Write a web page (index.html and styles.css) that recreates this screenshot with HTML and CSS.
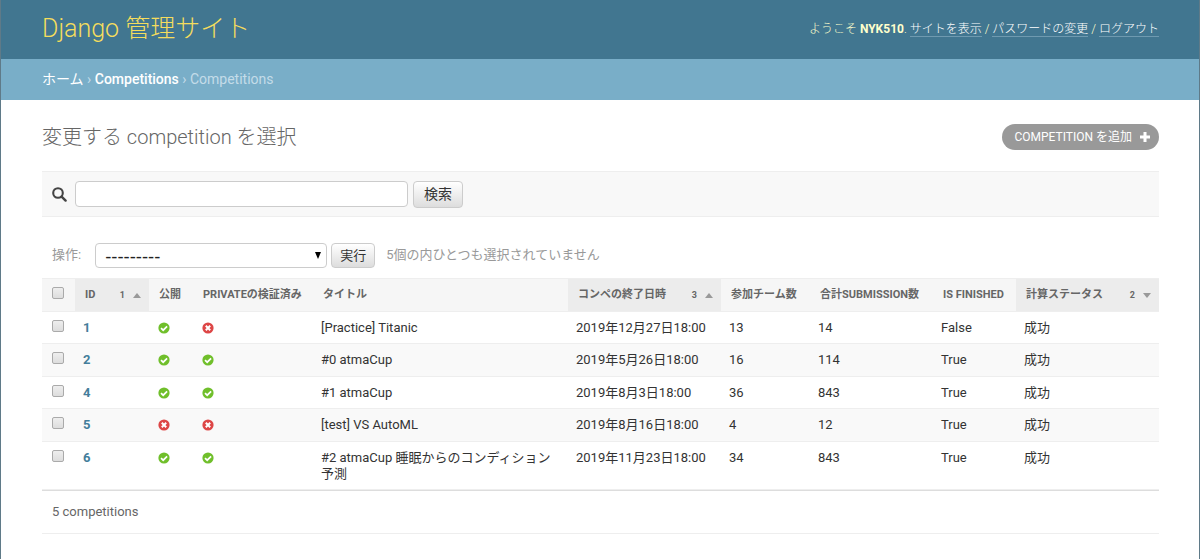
FILE: index.html
```html
<!DOCTYPE html>
<html lang="ja">
<head>
    <meta charset="UTF-8">
    <meta name="viewport" content="width=device-width, initial-scale=1.0">
    <title>変更する competition を選択 | Django 管理サイト</title>
    <link rel="stylesheet" href="styles.css">
</head>
<body>

    <!-- shared icons -->
    <svg class="sprite" aria-hidden="true">
        <symbol id="icon-yes" viewBox="0 0 12 12">
            <circle cx="6" cy="6" r="5.6" fill="#70bf2b"/>
            <path d="M3 6.1l2.2 2.1 3.9-3.9" fill="none" stroke="#fff" stroke-width="1.7"/>
        </symbol>
        <symbol id="icon-no" viewBox="0 0 12 12">
            <circle cx="6" cy="6" r="5.6" fill="#dd4646"/>
            <path d="M3.8 3.8l4.4 4.4M8.2 3.8L3.8 8.2" fill="none" stroke="#fff" stroke-width="2"/>
        </symbol>
        <symbol id="icon-up" viewBox="0 0 8 5">
            <path d="M0 5l4-5 4 5z" fill="#999"/>
        </symbol>
        <symbol id="icon-down" viewBox="0 0 8 5">
            <path d="M0 0h8L4 5z" fill="#999"/>
        </symbol>
    </svg>

    <header id="header">
        <h1 class="site-name">Django 管理サイト</h1>
        <div class="user-tools">
            ようこそ <strong>NYK510</strong>.
            <a href="#">サイトを表示</a> /
            <a href="#">パスワードの変更</a> /
            <a href="#">ログアウト</a>
        </div>
    </header>

    <nav class="breadcrumbs">
        <a href="#" class="home">ホーム</a> &rsaquo; <a href="#">Competitions</a> &rsaquo; Competitions
    </nav>

    <main id="content">
        <div class="title-row">
            <h2 class="page-title">変更する competition を選択</h2>
            <a href="#" class="addlink">Competition を追加
                <svg class="plus" viewBox="0 0 10 10"><path d="M5 0v10M0 5h10" stroke="#fff" stroke-width="3"/></svg>
            </a>
        </div>

        <form class="search">
            <label for="searchbar">
                <svg class="search-icon" viewBox="0 0 15 15"><circle cx="6" cy="6" r="4.8" fill="none" stroke="#444" stroke-width="2.1"/><path d="M9.6 9.6l4 4" stroke="#444" stroke-width="2.4" stroke-linecap="round"/></svg>
            </label>
            <input type="text" id="searchbar" class="searchbar" aria-label="検索">
            <button type="submit" class="button search-button">検索</button>
        </form>

        <form class="changelist">
            <div class="actions">
                <label for="action">操作:</label>
                <div class="select-box">
                    <select id="action">
                        <option>---------</option>
                    </select>
                    <svg class="select-arrow" viewBox="0 0 6 7"><path d="M0 0h6L3 7z"/></svg>
                </div>
                <button type="submit" class="button">実行</button>
                <span class="action-counter">5個の内ひとつも選択されていません</span>
            </div>

            <table class="results">
                <colgroup>
                    <col class="col-check">
                    <col class="col-id">
                    <col class="col-public">
                    <col class="col-private">
                    <col>
                    <col class="col-date">
                    <col class="col-teams">
                    <col class="col-submissions">
                    <col class="col-finished">
                    <col class="col-status">
                </colgroup>
                <thead>
                    <tr>
                        <th class="check"><input type="checkbox" aria-label="すべて選択"></th>
                        <th class="sorted"><div class="sort"><span>ID</span><span class="priority">1</span><svg class="arrow"><use href="#icon-up"/></svg></div></th>
                        <th>公開</th>
                        <th>Privateの検証済み</th>
                        <th>タイトル</th>
                        <th class="sorted"><div class="sort"><span>コンペの終了日時</span><span class="priority">3</span><svg class="arrow"><use href="#icon-up"/></svg></div></th>
                        <th>参加チーム数</th>
                        <th>合計Submission数</th>
                        <th>Is finished</th>
                        <th class="sorted"><div class="sort"><span>計算ステータス</span><span class="priority">2</span><svg class="arrow"><use href="#icon-down"/></svg></div></th>
                    </tr>
                </thead>
                <tbody>
                    <tr>
                        <td class="check"><input type="checkbox" aria-label="1"></td>
                        <td><a href="#">1</a></td>
                        <td><svg class="bool"><use href="#icon-yes"/></svg></td>
                        <td><svg class="bool"><use href="#icon-no"/></svg></td>
                        <td>[Practice] Titanic</td>
                        <td>2019年12月27日18:00</td>
                        <td>13</td>
                        <td>14</td>
                        <td>False</td>
                        <td>成功</td>
                    </tr>
                    <tr>
                        <td class="check"><input type="checkbox" aria-label="2"></td>
                        <td><a href="#">2</a></td>
                        <td><svg class="bool"><use href="#icon-yes"/></svg></td>
                        <td><svg class="bool"><use href="#icon-yes"/></svg></td>
                        <td>#0 atmaCup</td>
                        <td>2019年5月26日18:00</td>
                        <td>16</td>
                        <td>114</td>
                        <td>True</td>
                        <td>成功</td>
                    </tr>
                    <tr>
                        <td class="check"><input type="checkbox" aria-label="4"></td>
                        <td><a href="#">4</a></td>
                        <td><svg class="bool"><use href="#icon-yes"/></svg></td>
                        <td><svg class="bool"><use href="#icon-yes"/></svg></td>
                        <td>#1 atmaCup</td>
                        <td>2019年8月3日18:00</td>
                        <td>36</td>
                        <td>843</td>
                        <td>True</td>
                        <td>成功</td>
                    </tr>
                    <tr>
                        <td class="check"><input type="checkbox" aria-label="5"></td>
                        <td><a href="#">5</a></td>
                        <td><svg class="bool"><use href="#icon-no"/></svg></td>
                        <td><svg class="bool"><use href="#icon-no"/></svg></td>
                        <td>[test] VS AutoML</td>
                        <td>2019年8月16日18:00</td>
                        <td>4</td>
                        <td>12</td>
                        <td>True</td>
                        <td>成功</td>
                    </tr>
                    <tr>
                        <td class="check"><input type="checkbox" aria-label="6"></td>
                        <td><a href="#">6</a></td>
                        <td><svg class="bool"><use href="#icon-yes"/></svg></td>
                        <td><svg class="bool"><use href="#icon-yes"/></svg></td>
                        <td>#2 atmaCup 睡眠からのコンディション予測</td>
                        <td>2019年11月23日18:00</td>
                        <td>34</td>
                        <td>843</td>
                        <td>True</td>
                        <td>成功</td>
                    </tr>
                </tbody>
            </table>

            <p class="paginator">5 competitions</p>
        </form>
    </main>

</body>
</html>
```

FILE: styles.css
```css
* {
    box-sizing: border-box;
}

body {
    margin: 0;
    min-height: 100vh;
    border: solid #5f7a88;
    border-width: 0 1px;
    background: #fff;
    color: #333;
    font-family: Roboto, "Noto Sans CJK JP", sans-serif;
    font-size: 14px;
    line-height: 16px;
}

a {
    text-decoration: none;
}

.sprite {
    display: none;
}

/* header */

#header {
    display: flex;
    justify-content: space-between;
    align-items: center;
    height: 59px;
    padding: 0 40px 2px 41px;
    background: #417690;
    color: #ffc;
}

.site-name {
    margin: 0;
    color: #f5dd5d;
    font-size: 25px;
    font-weight: 300;
    line-height: 30px;
}

.user-tools {
    font-size: 12px;
    font-weight: 300;
}

.user-tools strong {
    font-weight: 700;
}

.user-tools a {
    border-bottom: 1px solid #6f9ab0;
    color: #fff;
}

.breadcrumbs {
    padding: 12px 41px;
    border-bottom: 1px solid #79aec8;
    background: #79aec8;
    color: #c4dce8;
    font-size: 14px;
}

.breadcrumbs a {
    color: #fff;
    font-weight: 500;
}

.breadcrumbs .home {
    font-weight: 400;
}

/* content */

#content {
    padding: 20px 40px 24px 41px;
}

.title-row {
    display: flex;
    justify-content: space-between;
    align-items: center;
    height: 34px;
    margin-bottom: 17px;
}

.page-title {
    margin: 0;
    color: #666;
    font-size: 20px;
    font-weight: 300;
    line-height: 26px;
}

.addlink {
    display: flex;
    align-items: center;
    gap: 8px;
    height: 26px;
    padding: 0 9px 0 12px;
    border-radius: 13px;
    background: #999;
    color: #fff;
    font-size: 12px;
    text-transform: uppercase;
}

.plus {
    width: 10px;
    height: 10px;
}

.search {
    display: flex;
    align-items: center;
    gap: 5px;
    height: 46px;
    padding: 0 10px;
    border: solid #eee;
    border-width: 1px 0;
    background: #f8f8f8;
}

.search-icon {
    display: block;
    width: 15px;
    height: 15px;
    margin-right: 3px;
}

.searchbar {
    width: 333px;
    height: 26px;
    padding: 2px 6px;
    border: 1px solid #ccc;
    border-radius: 4px;
    font: inherit;
}

.button {
    height: 25px;
    padding: 0 8px;
    border: 1px solid #ccc;
    border-radius: 4px;
    background: linear-gradient(#fff, #ddd);
    color: #333;
    font: inherit;
}

.search-button {
    height: 27px;
    padding: 0 10px;
}

.actions {
    display: flex;
    align-items: center;
    gap: 4px;
    margin-top: 26px;
    padding: 0 10px;
    color: #999;
    font-size: 13px;
}

.actions label {
    margin-right: 10px;
}

.actions label,
.action-counter {
    padding-bottom: 2px;
}

.select-box {
    position: relative;
}

.select-box select {
    appearance: none;
    display: block;
    width: 232px;
    height: 25px;
    padding: 0 20px 0 9px;
    border: 1px solid #ccc;
    border-radius: 4px;
    background: #fff;
    color: #222;
    font: 17px "DejaVu Sans", sans-serif;
}

.select-arrow {
    position: absolute;
    top: 9px;
    right: 6px;
    width: 6px;
    height: 7px;
}

.action-counter {
    margin-left: 7px;
}

/* results table */

.results {
    width: 100%;
    margin-top: 10px;
    border-spacing: 0;
    table-layout: fixed;
    border-bottom: 1px solid #ddd;
}

.col-check { width: 33px; }
.col-id { width: 74px; }
.col-public { width: 44px; }
.col-private { width: 120px; }
.col-date { width: 153px; }
.col-teams { width: 89px; }
.col-submissions { width: 123px; }
.col-finished { width: 83px; }
.col-status { width: 143px; }

.results th {
    height: 34px;
    padding: 0 10px;
    border: solid #eee;
    border-width: 1px 0;
    background: #f6f6f6;
    color: #666;
    font-size: 11px;
    font-weight: 700;
    text-align: left;
    text-transform: uppercase;
    white-space: nowrap;
}

.results th.sorted {
    padding-right: 8px;
    background: #ececec;
}

.sort {
    display: flex;
    align-items: center;
}

.priority {
    margin-left: auto;
    font-size: 9px;
}

.arrow {
    width: 8px;
    height: 5px;
    margin-left: 8px;
}

.results td {
    padding: 8px 8px 7px;
    border-bottom: 1px solid #eee;
    font-size: 13px;
    vertical-align: top;
}

.results tr:nth-child(even) td {
    padding-bottom: 8px;
    background: #f9f9f9;
}

.results td a {
    color: #447e9b;
    font-weight: 700;
}

.results .check {
    padding-top: 8px;
    padding-left: 10px;
    padding-right: 0;
    vertical-align: top;
}

.check input {
    appearance: none;
    display: block;
    width: 12px;
    height: 12px;
    margin: 0;
    border: 1px solid #aaa;
    border-radius: 2px;
    background: linear-gradient(#eee, #ddd);
}

.bool {
    display: block;
    width: 12px;
    height: 12px;
    margin: 2px 0 0 1px;
}

.paginator {
    margin: 0;
    padding: 13px 10px;
    border-bottom: 1px solid #eee;
    color: #666;
    font-size: 13px;
}
```
